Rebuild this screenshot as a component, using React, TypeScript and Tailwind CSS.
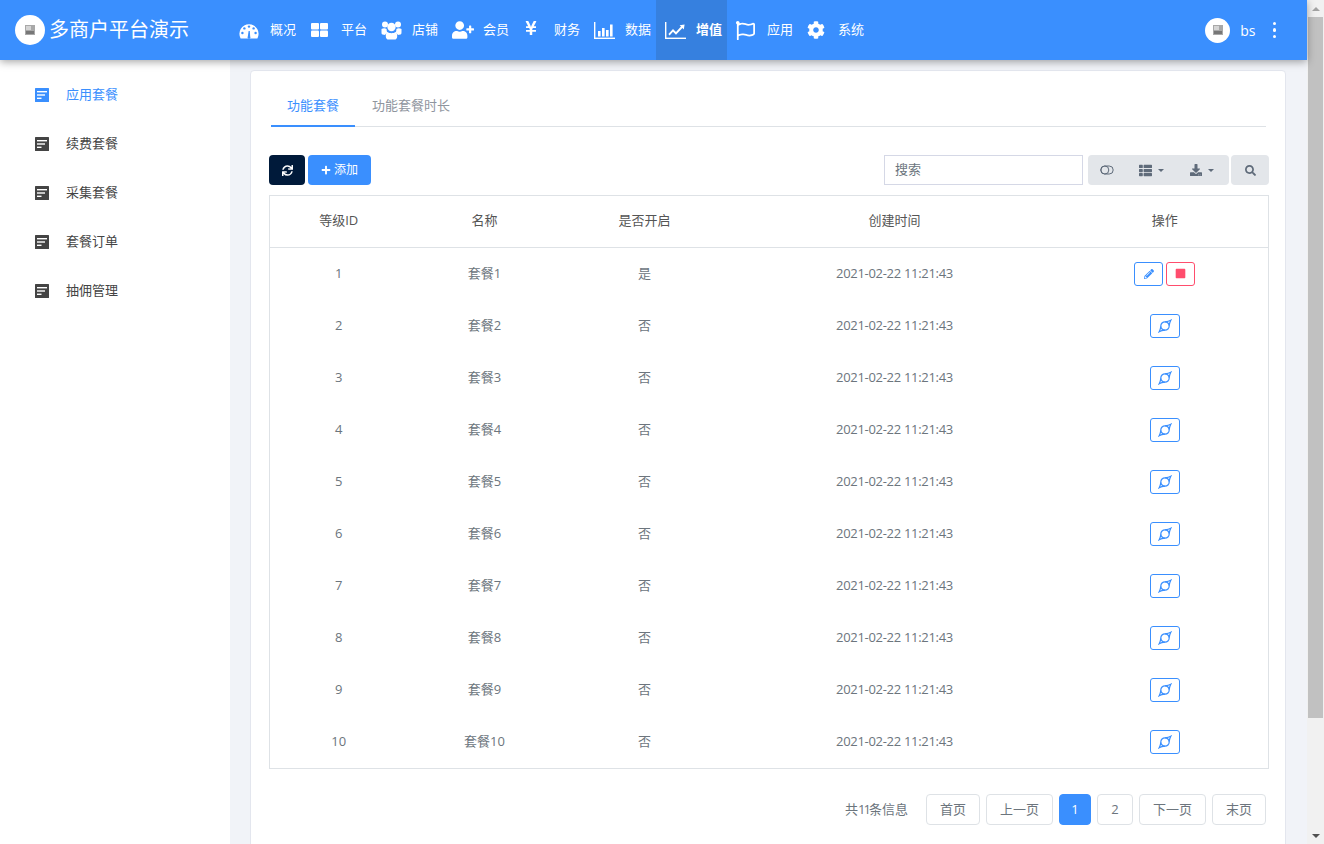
import React from "react";
import {
  FaCog,
  FaDownload,
  FaPencilAlt,
  FaPlus,
  FaRegFlag,
  FaSearch,
  FaStop,
  FaSync,
  FaThList,
  FaUserPlus,
  FaYenSign,
} from "react-icons/fa";

const GaugeIcon = () => (
  <svg width="20" height="16" viewBox="0 0 20 16" aria-hidden="true" className="mt-[2px]">
    <path d="M1.6 15.5 A9.6 9.6 0 1 1 18.4 15.5 Z" fill="#fff" />
    <circle cx="10" cy="3.6" r="1.2" fill="#3a8ffe" />
    <circle cx="5.4" cy="5.4" r="1.2" fill="#3a8ffe" />
    <circle cx="14.6" cy="5.4" r="1.2" fill="#3a8ffe" />
    <circle cx="3.4" cy="10" r="1.2" fill="#3a8ffe" />
    <circle cx="16.6" cy="10" r="1.2" fill="#3a8ffe" />
    <path d="M9.6 8 L10.8 8 L11.2 13.6 A1.4 1.4 0 1 1 8.8 13.6 Z" fill="#3a8ffe" />
  </svg>
);

const GridIcon = () => (
  <svg width="19" height="16" viewBox="0 0 19 16" aria-hidden="true" fill="#fff" className="-mt-[1px]">
    <rect x="1" y="1" width="8" height="6.5" rx="1" />
    <rect x="10" y="1" width="8" height="6.5" rx="1" />
    <rect x="1" y="8.5" width="8" height="6.5" rx="1" />
    <rect x="10" y="8.5" width="8" height="6.5" rx="1" />
  </svg>
);

const GroupIcon = () => (
  <svg width="21" height="19" viewBox="0 0 21 19" aria-hidden="true" fill="#fff">
    <circle cx="4" cy="3.4" r="3" />
    <circle cx="17" cy="3.4" r="3" />
    <circle cx="10.5" cy="6" r="4.2" />
    <path d="M0.5 8 C2 7 4.5 7 5.6 8 C5.6 10 6 11 6.6 11.4 C5.4 12 4.4 13 4.2 14 L1.6 13.6 C0.6 13.2 0.5 12.4 0.5 11 Z" />
    <path d="M20.5 8 C19 7 16.5 7 15.4 8 C15.4 10 15 11 14.4 11.4 C15.6 12 16.6 13 16.8 14 L19.4 13.6 C20.4 13.2 20.5 12.4 20.5 11 Z" />
    <path d="M6.4 11 C8.6 12.6 12.4 12.6 14.6 11 C16 11.6 16.2 13.4 16.2 15.4 C16.2 17.4 15 18.5 13.4 18.5 L7.6 18.5 C6 18.5 4.8 17.4 4.8 15.4 C4.8 13.4 5 11.6 6.4 11 Z" />
  </svg>
);

const BarsIcon = () => (
  <svg width="21" height="17" viewBox="0 0 21 17" aria-hidden="true" fill="#fff">
    <rect x="0" y="0" width="1.4" height="17" />
    <rect x="0" y="15.6" width="21" height="1.4" />
    <rect x="4" y="9" width="2.6" height="5.5" />
    <rect x="8" y="6" width="2.6" height="8.5" />
    <rect x="12" y="8" width="2.6" height="6.5" />
    <rect x="16" y="2.5" width="2.6" height="12" />
  </svg>
);

const TrendIcon = () => (
  <svg width="21" height="17" viewBox="0 0 21 17" aria-hidden="true" fill="#fff">
    <rect x="0" y="0" width="1.4" height="17" />
    <rect x="0" y="15.6" width="21" height="1.4" />
    <path d="M3.4 12 L8 7 L11 10 L16 4.6 L14.6 3.2 L19.6 2.4 L18.8 7.4 L17.4 6 L11 12.8 L8 9.8 L4.6 13.4 Z" />
  </svg>
);

const navItems = [
  { label: "概况", icon: <GaugeIcon /> },
  { label: "平台", icon: <GridIcon /> },
  { label: "店铺", icon: <GroupIcon /> },
  { label: "会员", icon: <FaUserPlus size={22} /> },
  { label: "财务", icon: <FaYenSign size={16} className="-mt-[4px]" /> },
  { label: "数据", icon: <BarsIcon /> },
  { label: "增值", icon: <TrendIcon />, active: true },
  { label: "应用", icon: <FaRegFlag size={19} /> },
  { label: "系统", icon: <FaCog size={18} /> },
];

const sideItems = ["应用套餐", "续费套餐", "采集套餐", "套餐订单", "抽佣管理"];

const rows = Array.from({ length: 10 }, (_, i) => ({
  id: i + 1,
  name: `套餐${i + 1}`,
  open: i === 0,
}));

const pages = [
  { label: "首页", w: "w-[54px]" },
  { label: "上一页", w: "w-[67px]" },
  { label: "1", w: "w-[32px]", active: true },
  { label: "2", w: "w-[36px]" },
  { label: "下一页", w: "w-[67px]" },
  { label: "末页", w: "w-[54px]" },
];

const Avatar = ({ size }: { size: string }) => (
  <span className={`flex ${size} items-center justify-center rounded-full bg-white`}>
    <svg width="12" height="12" viewBox="0 0 12 12" aria-hidden="true">
      <rect x="1" y="1" width="10" height="10" fill="#a8a8a8" />
      <rect x="2" y="2" width="5" height="4" fill="#d4d4d4" />
      <rect x="2" y="7" width="8" height="3" fill="#777" />
    </svg>
  </span>
);

const DocIcon = ({ color }: { color: string }) => (
  <svg width="14" height="14" viewBox="0 0 14 14" className={color} aria-hidden="true">
    <rect width="14" height="14" rx="0.5" fill="currentColor" />
    <rect x="2" y="3" width="10" height="1.4" fill="#fff" />
    <rect x="2" y="6.3" width="8" height="1.4" fill="#fff" />
    <rect x="2" y="9.6" width="4.5" height="1.4" fill="#fff" />
  </svg>
);

const ToggleIcon = () => (
  <svg width="14" height="10" viewBox="0 0 14 10" fill="none" stroke="#5f6b7a" strokeWidth="1" aria-hidden="true">
    <circle cx="4.8" cy="5" r="4" />
    <rect x="0.8" y="1" width="12.4" height="8" rx="4" />
  </svg>
);

const EnableIcon = () => (
  <svg width="14" height="14" viewBox="0 0 14 14" fill="none" stroke="#3a8ffe" strokeWidth="1.2" aria-hidden="true">
    <circle cx="7" cy="7" r="4.2" />
    <path d="M7 2.8 C9 2.6 11 2.2 12.8 1.2 C12 2.8 11.4 4 11.2 6.6" />
    <path d="M7 11.2 C5 11.4 3 11.8 1.2 12.8 C2 11.2 2.6 10 2.8 7.4" />
  </svg>
);

const Caret = () => (
  <span className="ml-[6px] inline-block h-0 w-0 border-x-[3.5px] border-t-[3.5px] border-x-transparent border-t-[#5f6b7a]" />
);

export default function App() {
  return (
    <div className="flex h-[844px] w-[1324px] overflow-hidden bg-[#f1f3f8] font-['Open_Sans','Noto_Sans_CJK_SC',sans-serif] text-[13px] text-[#6c757d]">
      <div className="flex h-full w-[1307px] flex-col">
        {/* Top bar */}
        <header className="relative z-10 flex h-[60px] shrink-0 items-center bg-[#3a8ffe] text-white shadow-[0_2px_8px_rgba(0,0,0,0.35)]">
          <div className="flex h-full w-[230px] shrink-0 items-center gap-[4px] pl-[15px]">
            <Avatar size="h-[30px] w-[30px]" />
            <span className="text-[20px] leading-none">多商户平台演示</span>
          </div>
          <nav className="flex h-full">
            {navItems.map((item) => (
              <a
                key={item.label}
                className={`flex h-full w-[71px] items-center pl-[9px] ${item.active ? "bg-[#3680df]" : ""}`}
              >
                <span className="flex w-[31px] shrink-0 items-center">{item.icon}</span>
                <span className={item.active ? "font-semibold" : ""}>{item.label}</span>
              </a>
            ))}
          </nav>
          <div className="ml-auto flex items-center pr-[31px]">
            <Avatar size="h-[25px] w-[25px]" />
            <span className="ml-[10px] text-[14px]">bs</span>
            <span className="ml-[17px] flex flex-col gap-[3px]">
              <i className="h-[3.5px] w-[3.5px] rounded-full bg-white" />
              <i className="h-[3.5px] w-[3.5px] rounded-full bg-white" />
              <i className="h-[3.5px] w-[3.5px] rounded-full bg-white" />
            </span>
          </div>
        </header>

        <div className="flex min-h-0 flex-1">
          {/* Sidebar */}
          <aside className="w-[230px] shrink-0 bg-white pt-[10px]">
            {sideItems.map((label, i) => (
              <div
                key={label}
                className={`flex h-[49px] items-center gap-[17px] pl-[35px] ${i === 0 ? "text-[#3a8ffe]" : "text-[#444]"}`}
              >
                <DocIcon color={i === 0 ? "text-[#3a8ffe]" : "text-[#444]"} />
                <span>{label}</span>
              </div>
            ))}
          </aside>

          {/* Content */}
          <main className="min-w-0 flex-1 pl-[20px] pr-[21px] pt-[10px]">
            <div className="h-[800px] rounded-[4px] border border-[#e3e6ee] bg-white pl-[18px] pr-[16px]">
              <div className="mt-[15px] ml-[2px] mr-[3px] flex h-[41px] border-b border-[#dee2e6]">
                <div className="flex h-[41px] w-[84px] items-center justify-center border-b-2 border-[#3a8ffe] text-[#3a8ffe]">
                  功能套餐
                </div>
                <div className="flex h-[40px] w-[112px] items-center justify-center text-[#8f959e]">功能套餐时长</div>
              </div>

              <div className="mt-[28px] flex h-[30px] items-center">
                <button className="flex h-[30px] w-[36px] items-center justify-center rounded-[4px] bg-[#001a3a] text-white">
                  <FaSync size={11} />
                </button>
                <button className="ml-[3px] flex h-[30px] w-[63px] items-center justify-center gap-[3px] rounded-[4px] bg-[#3a8ffe] text-[12px] text-white">
                  <FaPlus size={10} />
                  添加
                </button>
                <div className="ml-auto flex h-[30px] w-[199px] items-center border border-[#d5d8e6] pl-[10px] text-[#6c757d]">
                  搜索
                </div>
                <div className="ml-[5px] flex h-[30px] w-[141px] items-center rounded-[4px] bg-[#e3e6ea] text-[#5f6b7a]">
                  <span className="ml-[12px]">
                    <ToggleIcon />
                  </span>
                  <span className="ml-[25px] flex items-center">
                    <FaThList size={13} />
                    <Caret />
                  </span>
                  <span className="ml-[26px] flex items-center">
                    <FaDownload size={12} />
                    <Caret />
                  </span>
                </div>
                <div className="ml-[2px] flex h-[30px] w-[38px] items-center justify-center rounded-[4px] bg-[#e3e6ea] text-[#5f6b7a]">
                  <FaSearch size={11} />
                </div>
              </div>

              <table className="mt-[10px] w-[1000px] table-fixed border border-[#dee2e6] text-center">
                <thead>
                  <tr className="h-[52px] border-b border-[#dee2e6] text-[#555]">
                    <th className="w-[138px] pb-[2px] font-normal">等级ID</th>
                    <th className="w-[154px] pb-[2px] font-normal">名称</th>
                    <th className="w-[166px] pb-[2px] font-normal">是否开启</th>
                    <th className="w-[334px] pb-[2px] font-normal">创建时间</th>
                    <th className="pb-[2px] font-normal">操作</th>
                  </tr>
                </thead>
                <tbody>
                  {rows.map((row) => (
                    <tr key={row.id} className="h-[52px] last:h-[53px]">
                      <td>{row.id}</td>
                      <td>{row.name}</td>
                      <td>{row.open ? "是" : "否"}</td>
                      <td className="tracking-[-0.3px]">2021-02-22 11:21:43</td>
                      <td>
                        <div className="flex items-center justify-center gap-[3px]">
                          {row.open ? (
                            <>
                              <span className="flex h-[24px] w-[29px] items-center justify-center rounded-[3px] border border-[#3a8ffe] text-[#3a8ffe]">
                                <FaPencilAlt size={10} />
                              </span>
                              <span className="flex h-[24px] w-[29px] items-center justify-center rounded-[3px] border border-[#ff4d6d] text-[#ff4d6d]">
                                <FaStop size={11} />
                              </span>
                            </>
                          ) : (
                            <span className="flex h-[24px] w-[30px] items-center justify-center rounded-[3px] border border-[#3a8ffe]">
                              <EnableIcon />
                            </span>
                          )}
                        </div>
                      </td>
                    </tr>
                  ))}
                </tbody>
              </table>

              <div className="mt-[25px] flex items-center justify-end gap-[6px] pr-[3px]">
                <span className="mr-[12px]">
                  共<span className="tracking-[-2px]">11</span>条信息
                </span>
                {pages.map((p) => (
                  <span
                    key={p.label}
                    className={`flex h-[31px] ${p.w} items-center justify-center rounded-[4px] border ${
                      p.active ? "border-[#3a8ffe] bg-[#3a8ffe] text-white" : "border-[#dee2e6]"
                    }`}
                  >
                    {p.label}
                  </span>
                ))}
              </div>
            </div>
          </main>
        </div>
      </div>

      {/* Browser scrollbar */}
      <div className="flex h-full w-[17px] shrink-0 flex-col items-center bg-[#f1f1f1]">
        <div className="flex h-[17px] items-center justify-center">
          <span className="h-0 w-0 border-x-[4px] border-b-[4px] border-x-transparent border-b-[#a3a3a3]" />
        </div>
        <div className="h-[701px] w-[15px] bg-[#c1c1c1]" />
        <div className="mt-auto flex h-[17px] items-center justify-center">
          <span className="h-0 w-0 border-x-[4px] border-t-[4px] border-x-transparent border-t-[#505050]" />
        </div>
      </div>
    </div>
  );
}
